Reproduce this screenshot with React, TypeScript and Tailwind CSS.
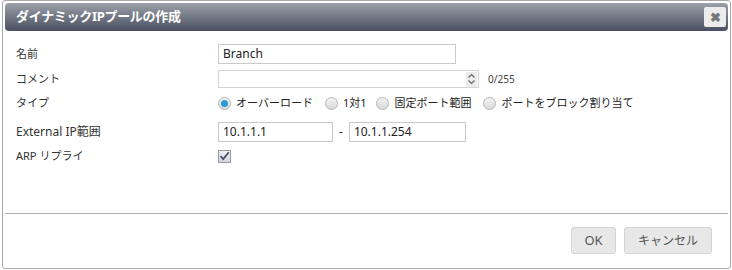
import React from "react";

const font = "font-['Noto_Sans','Noto_Sans_CJK_JP',sans-serif]";

function Radio({ checked }: { checked?: boolean }) {
  return (
    <span className="inline-flex h-[13px] w-[13px] shrink-0 items-center justify-center rounded-full border border-[#b5b5b5] bg-gradient-to-b from-[#f4f4f4] to-[#d9d9d9]">
      {checked && <span className="h-[7px] w-[7px] rounded-full bg-[#2d9ad6]" />}
    </span>
  );
}

export default function App() {
  return (
    <div className={`w-[732px] h-[270px] bg-white ${font} text-[#333]`}>
      <div className="ml-[2px] w-[729px] h-[269px] rounded-[3px] border border-[#a8a8a8] p-[2px] flex flex-col">
        {/* Title bar */}
        <div className="h-[28px] rounded-[4px] bg-gradient-to-b from-[#9da1ab] to-[#4a5060] flex items-center justify-between pl-[11px] pr-[2px]">
          <span className="text-white text-[13px] font-bold tracking-[-0.3px]">ダイナミックIPプールの作成</span>
          <span className="flex h-[20px] w-[22px] items-center justify-center rounded-[2px] bg-[#ececec] text-[#777] text-[13px] font-bold leading-none">
            ✖
          </span>
        </div>

        {/* Body */}
        <div className="h-[182px] pl-[11px] pt-[13px] text-[12px]">
          <div className="grid grid-cols-[202px_1fr] items-center h-[20px]">
            <span className="text-[11px]">名前</span>
            <div className="h-[20px] w-[238px] border border-[#c9c9c9] px-[4px] flex items-center text-[12px] text-[#222]">Branch</div>
          </div>
          <div className="grid grid-cols-[202px_1fr] items-center h-[18px] mt-[6px]">
            <span className="text-[11px]">コメント</span>
            <div className="flex items-center">
              <div className="h-[18px] w-[261px] border border-[#d3d3d3] flex justify-end items-center pr-[1px]">
                <div className="h-[15px] w-[11px] bg-[#ececec] flex flex-col items-center justify-center text-[#666]">
                  <svg width="7" height="12" viewBox="0 0 7 12">
                    <path d="M0.5 4.5 L3.5 1.5 L6.5 4.5" fill="none" stroke="#666" strokeWidth="1.2" />
                    <path d="M0.5 7.5 L3.5 10.5 L6.5 7.5" fill="none" stroke="#666" strokeWidth="1.2" />
                  </svg>
                </div>
              </div>
              <span className="ml-[9px] text-[10px] text-[#444]">0/255</span>
            </div>
          </div>
          <div className="grid grid-cols-[202px_1fr] items-center h-[18px] mt-[6px]">
            <span className="text-[11px]">タイプ</span>
            <div className="flex items-center text-[11px] text-[#222]">
              <Radio checked />
              <span className="ml-[5px] mr-[12px]">オーバーロード</span>
              <Radio />
              <span className="ml-[5px] mr-[10px]">1対1</span>
              <Radio />
              <span className="ml-[5px] mr-[12px]">固定ポート範囲</span>
              <Radio />
              <span className="ml-[5px]">ポートをブロック割り当て</span>
            </div>
          </div>
          <div className="grid grid-cols-[202px_1fr] items-center h-[20px] mt-[10px]">
            <span className="text-[12px]">External IP範囲</span>
            <div className="flex items-center text-[12px] text-[#222]">
              <div className="h-[20px] w-[115px] border border-[#c9c9c9] px-[4px] flex items-center">10.1.1.1</div>
              <span className="mx-[6px]">-</span>
              <div className="h-[20px] w-[117px] border border-[#c9c9c9] px-[4px] flex items-center">10.1.1.254</div>
            </div>
          </div>
          <div className="grid grid-cols-[202px_1fr] items-center h-[14px] mt-[6px]">
            <span className="text-[11px]">ARP リプライ</span>
            <span className="flex h-[13px] w-[13px] items-center justify-center border border-[#9a9aa6] bg-gradient-to-b from-[#eef0f4] to-[#d2d5de]">
              <svg width="11" height="10" viewBox="0 0 11 10">
                <path d="M1.5 5 L4.2 8 L9.8 1.2" fill="none" stroke="#4a5068" strokeWidth="1.8" />
              </svg>
            </span>
          </div>
        </div>

        {/* Footer */}
        <div className="border-t border-[#adadad] flex justify-end gap-[8px] pr-[16px] pt-[13px]">
          <button className="h-[27px] w-[45px] rounded-[3px] border border-[#d4d4d4] bg-[#e8e8e8] text-[13px] text-[#555]">OK</button>
          <button className="h-[27px] w-[88px] rounded-[3px] border border-[#d4d4d4] bg-[#e8e8e8] text-[12px] text-[#555]">キャンセル</button>
        </div>
      </div>
    </div>
  );
}
